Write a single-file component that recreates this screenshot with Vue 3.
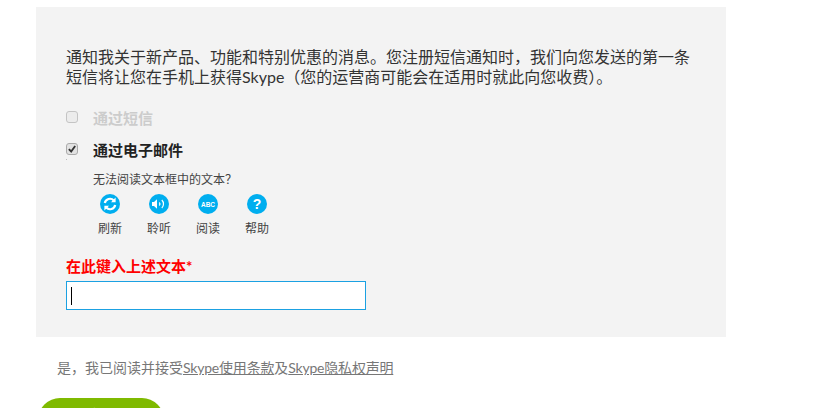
<script setup>
const tools = [
  { label: '刷新', kind: 'refresh' },
  { label: '聆听', kind: 'listen' },
  { label: '阅读', kind: 'read' },
  { label: '帮助', kind: 'help' }
]
</script>

<template>
  <main class="page">
    <section class="panel">
      <p class="intro">通知我关于新产品、功能和特别优惠的消息。您注册短信通知时&#xFF0C;我们向您发送的第一条<br>短信将让您在手机上获得Skype&#xFF08;您的运营商可能会在适用时就此向您收费&#xFF09;。</p>
      <label class="opt disabled"><span class="box"></span><span>通过短信</span></label>
      <label class="opt on">
        <span class="box checked">
          <svg viewBox="0 0 12 12" width="12" height="12"><path d="M2.2 6.2 5 9l4.8-6.6" fill="none" stroke="#333" stroke-width="2.2"/></svg>
        </span>
        <span>通过电子邮件</span>
      </label>
      <span class="dot"></span>
      <div class="captcha">
        <div class="cant">无法阅读文本框中的文本&#xFF1F;</div>
        <div class="tools">
          <div v-for="t in tools" :key="t.kind" class="tool">
            <svg class="ico" viewBox="0 0 20 20" width="20" height="20">
              <circle cx="10" cy="10" r="10" fill="#00aeef"/>
              <g v-if="t.kind === 'refresh'" fill="none" stroke="#fff" stroke-width="2.2">
                <path d="M4.8 9a5.3 5.3 0 0 1 9-2.6"/>
                <path d="M15.2 11a5.3 5.3 0 0 1-9 2.6"/>
                <path d="M15.6 3.6v4.6h-4.6z" fill="#fff" stroke="none"/>
                <path d="M4.4 16.4v-4.6h4.6z" fill="#fff" stroke="none"/>
              </g>
              <g v-else-if="t.kind === 'listen'" fill="#fff">
                <path d="M3 8h2L8 5.2v9.6L5 12H3z"/>
                <path d="M10.3 8.5a2.2 2.2 0 0 1 0 3" fill="none" stroke="#fff" stroke-width="1.2"/>
                <path d="M12.8 6a5.6 5.6 0 0 1 0 8" fill="none" stroke="#fff" stroke-width="1.2"/>
              </g>
              <text v-else-if="t.kind === 'read'" x="10" y="12.6" class="abc">ABC</text>
              <text v-else x="10" y="15" class="q">?</text>
            </svg>
            <span class="tool-label">{{ t.label }}</span>
          </div>
        </div>
      </div>
      <div class="req">在此键入上述文本*</div>
      <div class="field"><span class="caret"></span></div>
    </section>
    <p class="terms">是&#xFF0C;我已阅读并接受<a>Skype使用条款</a>及<a>Skype隐私权声明</a></p>
    <button class="go" type="button">我同意 - 继续</button>
  </main>
</template>

<style>
html, body { margin: 0; background: #fff; overflow: hidden; }
</style>

<style scoped>
.page {
  width: 824px;
  height: 408px;
  overflow: hidden;
  box-sizing: border-box;
  padding: 7px 0 0 36px;
  font-family: Lato, "Noto Sans CJK SC", sans-serif;
  color: #333;
}
.panel {
  width: 690px;
  height: 330px;
  box-sizing: border-box;
  background: #f3f3f3;
  padding: 40px 30px 0;
}
.intro {
  margin: 0 0 20px;
  font-size: 16px;
  line-height: 20px;
  color: #333;
}
.opt {
  display: flex;
  align-items: center;
  gap: 15px;
  height: 20px;
  font-size: 15px;
}
.opt.disabled { color: #ccc; margin-bottom: 12px; font-weight: 700; }
.opt.on { color: #222; font-weight: 700; }
.box {
  width: 10px;
  height: 10px;
  border: 1px solid #c4c4c4;
  border-radius: 3px;
  background: #ececec;
  display: flex;
  align-items: center;
  justify-content: center;
  margin-top: -1px;
}
.box.checked { border-color: #aaa; background: #e2e2e2; }
.dot {
  display: block;
  width: 1px;
  height: 1px;
  background: #bbb;
}
.captcha { margin: 12px 0 0 27px; }
.cant { font-size: 12px; line-height: 16px; color: #444; }
.tools { display: flex; margin-top: 6px; }
.tool {
  width: 49px;
  margin-left: -8px;
  margin-right: 8px;
  display: flex;
  flex-direction: column;
  align-items: center;
  font-size: 12px;
  color: #444;
}
.tool-label { margin-left: 1px; }
.ico { display: block; margin-bottom: 5px; }
.abc { font: 700 6.5px "Liberation Sans", sans-serif; fill: #fff; text-anchor: middle; }
.q { font: 700 14px "Liberation Sans", sans-serif; fill: #fff; text-anchor: middle; }
.req {
  margin-top: 20px;
  font-size: 15px;
  line-height: 20px;
  font-weight: 700;
  color: #f00;
}
.field {
  width: 300px;
  height: 29px;
  margin-top: 5px;
  box-sizing: border-box;
  border: 1px solid #1ba1e2;
  background: #fff;
  display: flex;
  align-items: center;
  padding-left: 4px;
}
.caret { width: 1px; height: 18px; background: #000; }
.terms {
  margin: 21px 0 0 21px;
  font-size: 14px;
  line-height: 20px;
  color: #777;
}
.terms a { color: #777; text-decoration: underline; letter-spacing: -0.2px; }
.go {
  display: block;
  width: 126px;
  height: 44px;
  margin: 20px 0 0 2px;
  padding: 0 0 10px;
  border: 0;
  border-radius: 22px;
  background: #7fba00;
  color: #fff;
  font: 600 16px Lato, "Noto Sans CJK SC", sans-serif;
}
</style>
